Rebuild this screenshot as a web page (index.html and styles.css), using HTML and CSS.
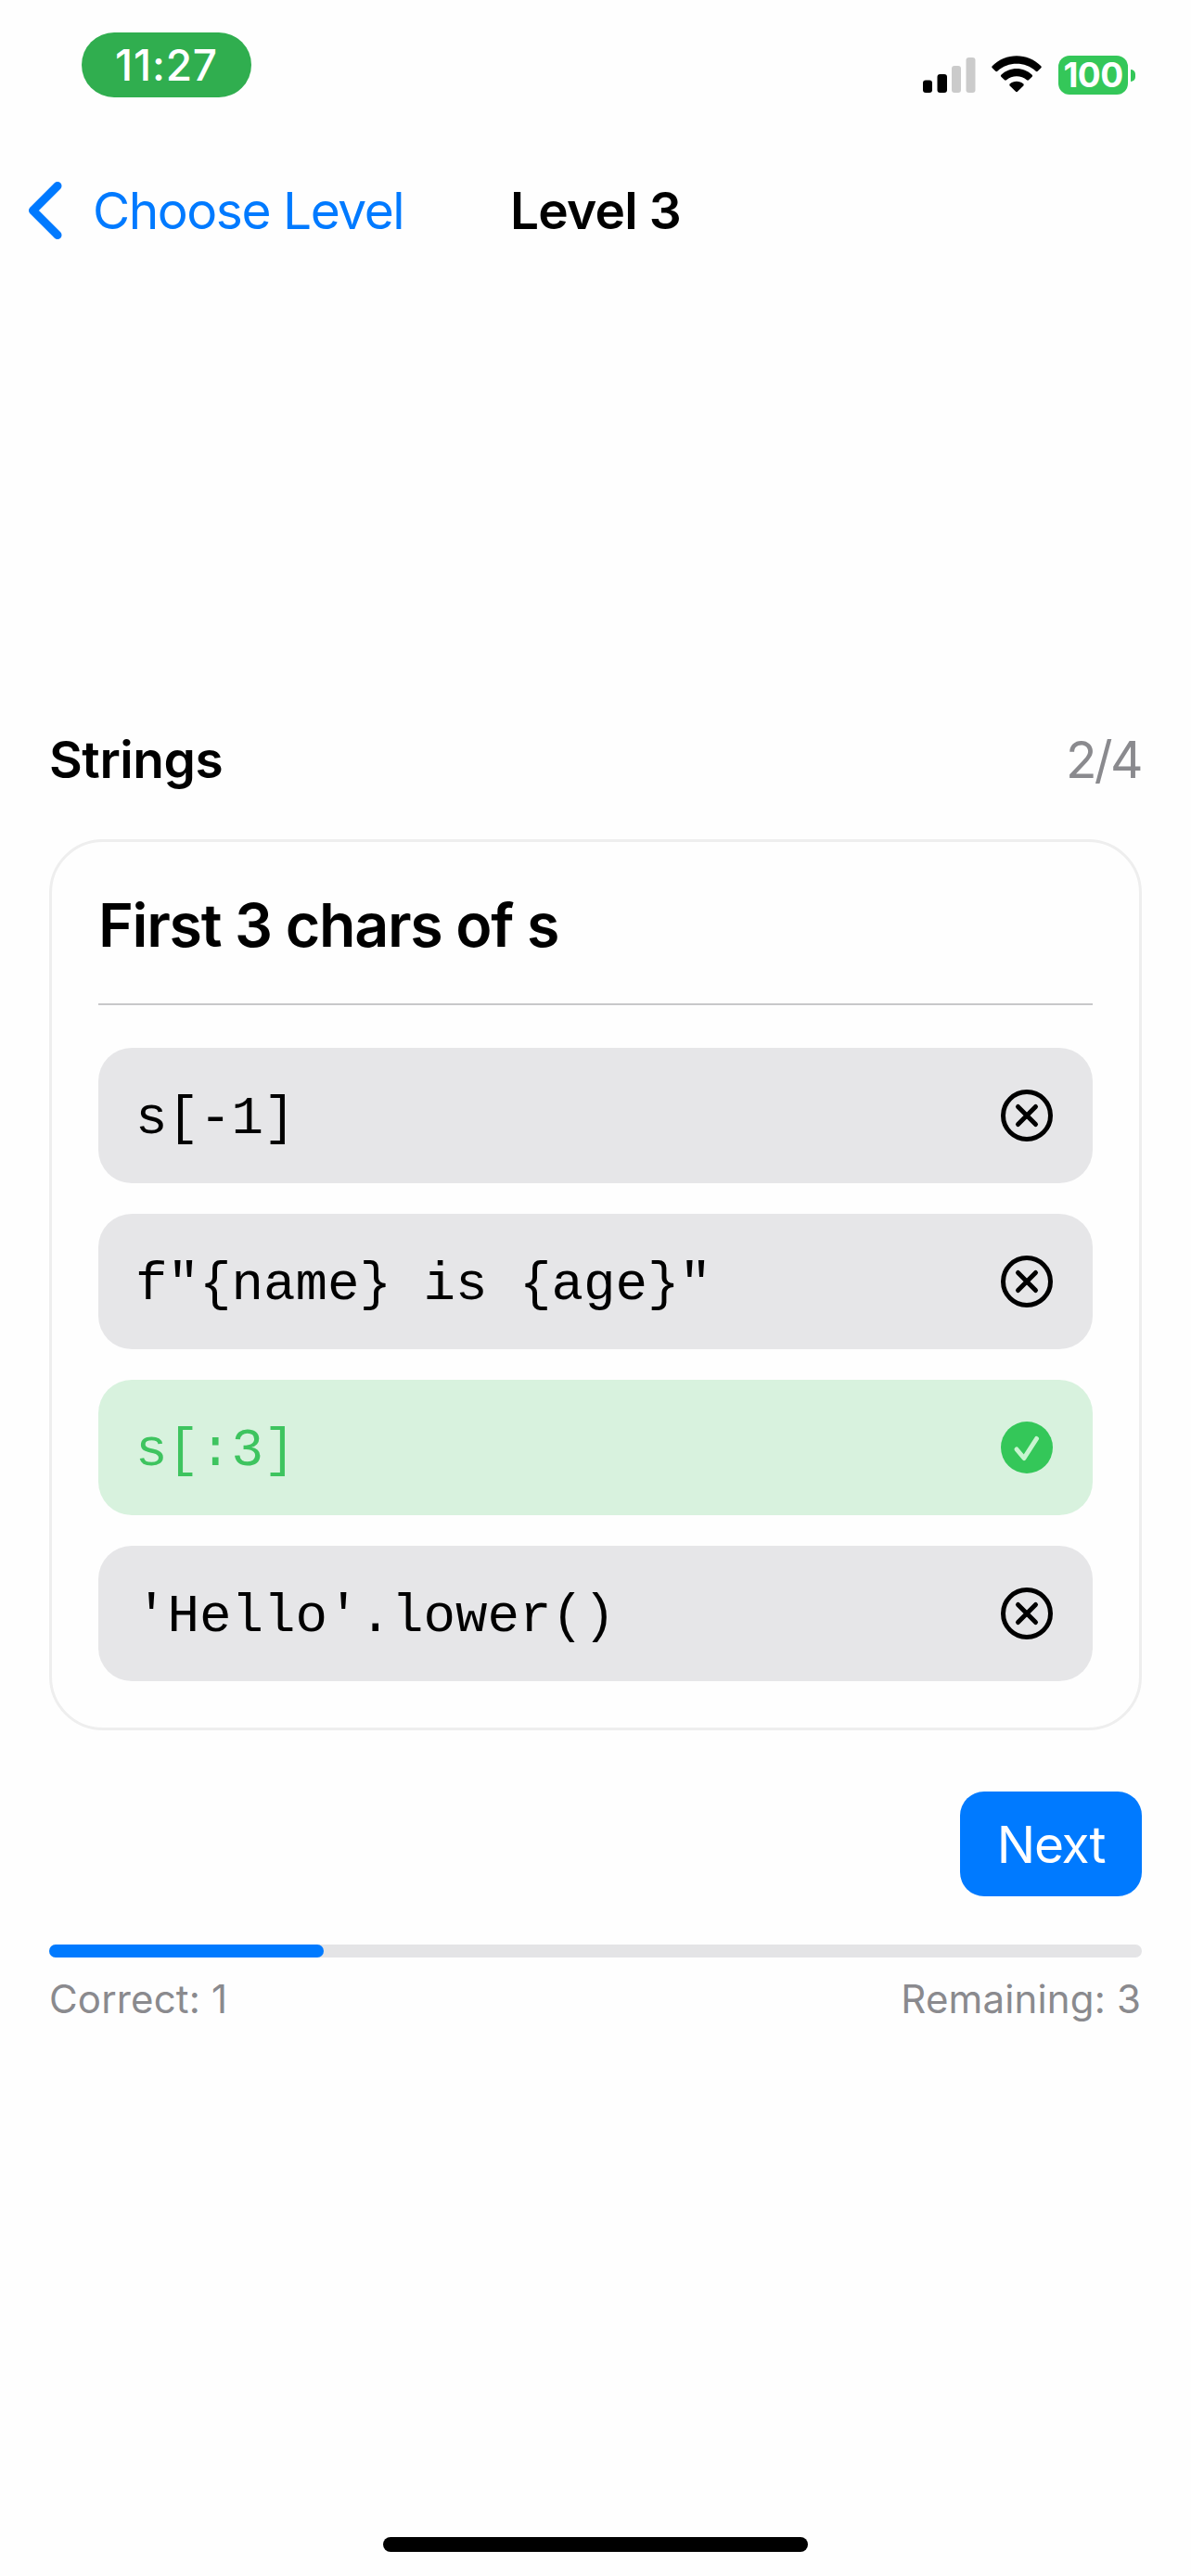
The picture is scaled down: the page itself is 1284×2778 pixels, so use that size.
FILE: index.html
```html
<!DOCTYPE html>
<html lang="en">
<head>
<meta charset="utf-8">
<title>Level 3</title>
<link rel="stylesheet" href="styles.css">
</head>
<body>
<div class="screen">
  <header class="status">
    <div class="clock"><span>11:27</span></div>
    <div class="indicators">
      <svg class="signal" width="57" height="38" viewBox="0 0 57 38">
        <rect x="0" y="24.5" width="10" height="13.5" rx="3"/>
        <rect x="15.5" y="18" width="10.5" height="20" rx="3"/>
        <rect class="off" x="31" y="9" width="10" height="29" rx="3"/>
        <rect class="off" x="46.5" y="0" width="10" height="38" rx="3"/>
      </svg>
      <svg class="wifi" width="54" height="40" viewBox="0 0 54 40">
        <path d="M0.7 11.3C15 -3.4 39 -3.4 53.3 11.3Q54.2 12.3 53.3 13.3L49.7 16.8Q48.7 17.7 47.700 16.800C36 6.200 18 6.200 6.300 16.800Q5.300 17.700 4.300 16.800L0.700 13.300Q-0.200 12.300 0.700 11.300Z"/>
        <path d="M10.300 20.700C19.500 11.700 34.500 11.700 43.700 20.700Q44.600 21.700 43.700 22.700L40 26.300Q39 27.200 38 26.300C32 20.900 22 20.900 16 26.300Q15 27.200 14 26.300L10.300 22.700Q9.400 21.700 10.300 20.700Z"/>
        <path d="M19.700 30.400C23.600 26.700 30.400 26.700 34.300 30.400Q35.200 31.400 34.300 32.400L28.200 38.600Q27 39.700 25.800 38.600L19.700 32.400Q18.800 31.400 19.700 30.400Z"/>
      </svg>
      <div class="battery"><span class="charge">100</span><i class="cap"></i></div>
    </div>
  </header>
  <nav class="nav">
    <a class="back">
      <svg width="40" height="66" viewBox="0 0 40 66"><path d="M33 6.500L6.500 33L33 59.500"/></svg>
      <span>Choose Level</span>
    </a>
    <h1>Level 3</h1>
  </nav>
  <main>
    <div class="heading"><h2>Strings</h2><span class="count">2/4</span></div>
    <section class="card">
      <h3>First 3 chars of s</h3>
      <hr>
      <ul class="answers">
        <li><code>s[-1]</code><svg class="mark" viewBox="0 0 56 56"><circle cx="28" cy="28" r="25.500"/><path d="M18.500 18.500L37.500 37.500M37.500 18.500L18.500 37.500"/></svg></li>
        <li><code>f"{name} is {age}"</code><svg class="mark" viewBox="0 0 56 56"><circle cx="28" cy="28" r="25.500"/><path d="M18.500 18.500L37.500 37.500M37.500 18.500L18.500 37.500"/></svg></li>
        <li class="right"><code>s[:3]</code><svg class="mark" viewBox="0 0 56 56"><circle cx="28" cy="28" r="28"/><path d="M17 30L25 39.500L38.500 18.500"/></svg></li>
        <li><code>'Hello'.lower()</code><svg class="mark" viewBox="0 0 56 56"><circle cx="28" cy="28" r="25.500"/><path d="M18.500 18.500L37.500 37.500M37.500 18.500L18.500 37.500"/></svg></li>
      </ul>
    </section>
    <button class="next">Next</button>
    <div class="progress"><div class="fill"></div></div>
    <div class="totals"><span>Correct: 1</span><span>Remaining: 3</span></div>
  </main>
  <div class="home"></div>
</div>
</body>
</html>
```
FILE: styles.css
```css
* { box-sizing: border-box; margin: 0; padding: 0; }
body {
  background: #fefefe;
  color: #000;
  font-family: Inter, "Liberation Sans", sans-serif;
}
.screen {
  width: 1284px;
  height: 2778px;
  display: flex;
  flex-direction: column;
  overflow: hidden;
}
.status {
  height: 157px;
  padding: 35px 60px 0 88px;
  display: flex;
  justify-content: space-between;
  align-items: flex-start;
}
.clock {
  width: 183px;
  height: 70px;
  border-radius: 35px;
  background: #30ae4f;
  color: #fff;
  font-size: 46px;
  font-weight: 500;
  letter-spacing: 0.8px;
  line-height: 70px;
  text-align: center;
}
.indicators {
  display: flex;
  align-items: flex-end;
  height: 67px;
}
.signal { margin-bottom: 2px; }
.signal .off { fill: #cbcbcb; }
.wifi { margin: 0 18px 2px 17px; }
.battery { display: flex; align-items: center; gap: 3px; }
.charge {
  width: 75px;
  height: 42px;
  border-radius: 12px;
  background: #34c759;
  color: #fff;
  font-size: 37px;
  font-weight: 700;
  letter-spacing: -0.6px;
  line-height: 42px;
  text-align: center;
}
.cap {
  width: 5px;
  height: 13px;
  border-radius: 0 6px 6px 0;
  background: #34c759;
}
.nav {
  height: 140px;
  padding: 0 29px;
  display: grid;
  grid-template-columns: 1fr auto 1fr;
  align-items: center;
}
.back {
  display: flex;
  align-items: center;
  gap: 31px;
  color: #007aff;
  font-size: 55px;
  letter-spacing: -1.45px;
  white-space: nowrap;
}
.back path {
  fill: none;
  stroke: #007aff;
  stroke-width: 9;
  stroke-linecap: round;
  stroke-linejoin: round;
}
h1, h2 { font-size: 55px; font-weight: 600; }
h1 { letter-spacing: -0.8px; }
h2 { letter-spacing: -0.4px; }
main {
  padding: 482px 53px 0;
  display: flex;
  flex-direction: column;
}
.heading {
  height: 80px;
  display: flex;
  justify-content: space-between;
  align-items: center;
}
.count { font-size: 55px; letter-spacing: -2.6px; padding-right: 1px; color: #8a8a8e; }
.card {
  margin-top: 46px;
  height: 961px;
  padding: 50px;
  border: 3px solid #eee;
  border-radius: 58px;
}
h3 {
  height: 80px;
  font-size: 64.5px;
  font-weight: 600;
  letter-spacing: -1.3px;
  line-height: 80px;
}
hr { height: 2px; margin: 44px 0 46px; border: 0; background: #c8c8ca; }
.answers { list-style: none; display: grid; gap: 33px; }
.answers li {
  height: 146px;
  padding: 0 43px 0 40px;
  display: flex;
  justify-content: space-between;
  align-items: center;
  border-radius: 36px;
  background: #e6e6e8;
}
code {
  padding-top: 6px;
  font-family: "Liberation Mono", monospace;
  font-size: 57.500px;
  white-space: pre;
}
.mark { width: 56px; height: 56px; fill: none; stroke: #000; stroke-width: 5; stroke-linecap: round; stroke-linejoin: round; }
.answers .right { background: #d8f2de; color: #3ec45f; }
.right circle { fill: #34c759; stroke: none; }
.right path { stroke: #c8f5d0; }
.next {
  align-self: flex-end;
  margin-top: 66px;
  width: 196px;
  height: 113px;
  border: 0;
  border-radius: 26px;
  background: #007aff;
  color: #fff;
  font: 400 55px Inter, sans-serif;
  letter-spacing: -1.2px;
}
.progress { margin-top: 52px; height: 14px; border-radius: 7px; background: #e4e4e6; }
.fill { width: 296px; height: 14px; border-radius: 7px; background: #007aff; }
.totals {
  height: 88px;
  padding-right: 1px;
  display: flex;
  justify-content: space-between;
  align-items: center;
  color: #8a8a8e;
  font-size: 42px;
  letter-spacing: 0.15px;
}
.home {
  margin: auto auto 26px;
  width: 458px;
  height: 16px;
  border-radius: 8px;
  background: #000;
}
```
